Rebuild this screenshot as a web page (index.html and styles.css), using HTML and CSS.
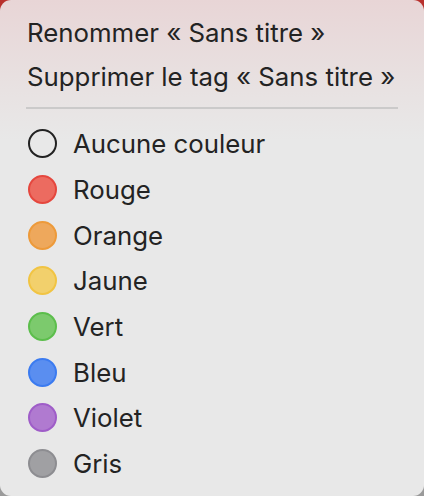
FILE: index.html
```html
<!DOCTYPE html>
<html lang="fr">
<head>
<meta charset="utf-8">
<link rel="stylesheet" href="styles.css">
</head>
<body>
<div class="menu">
  <div class="item">Renommer « Sans titre »</div>
  <div class="item">Supprimer le tag « Sans titre »</div>
  <div class="sep"></div>
  <div class="tag"><span class="dot none"></span>Aucune couleur</div>
  <div class="tag"><span class="dot red"></span>Rouge</div>
  <div class="tag"><span class="dot orange"></span>Orange</div>
  <div class="tag"><span class="dot yellow"></span>Jaune</div>
  <div class="tag"><span class="dot green"></span>Vert</div>
  <div class="tag"><span class="dot blue"></span>Bleu</div>
  <div class="tag"><span class="dot purple"></span>Violet</div>
  <div class="tag"><span class="dot gray"></span>Gris</div>
</div>
</body>
</html>
```
FILE: styles.css
```css
html, body {
  margin: 0;
  padding: 0;
}
body {
  width: 424px;
  height: 496px;
  overflow: hidden;
  background: linear-gradient(#b8302c 0, #b8302c 30px, #9a9a9a 466px);
}
.menu {
  box-sizing: border-box;
  width: 424px;
  height: 496px;
  border-radius: 11px;
  background: linear-gradient(180deg, #e8d5d6 0px, #e8e2e2 90px, #e8e8e8 140px, #e8e8e8 100%);
  padding: 11px 0 0 0;
  font-family: Inter, "Noto Sans", "Liberation Sans", sans-serif;
  font-size: 25.8px;
  color: #232323;
  display: flex;
  flex-direction: column;
}
.item {
  height: 44px;
  line-height: 44px;
  padding-left: 27px;
  white-space: nowrap;
}
.sep {
  height: 2px;
  background: #cbcaca;
  margin: 8px 26px 12px 26px;
}
.tag {
  height: 45.7px;
  display: flex;
  align-items: center;
  padding-left: 28px;
  white-space: nowrap;
}
.dot {
  box-sizing: border-box;
  width: 29px;
  height: 29px;
  border-radius: 50%;
  border: 2px solid;
  margin-right: 16px;
  flex: none;
}
.none { border-color: #222; background: transparent; }
.red { background: #ec6b60; border-color: #e5473e; }
.orange { background: #eea85c; border-color: #ed9a3a; }
.yellow { background: #f2d06c; border-color: #f1c443; }
.green { background: #7cca6d; border-color: #5cbe4c; }
.blue { background: #5a8ef0; border-color: #3b7bf0; }
.purple { background: #b07ad0; border-color: #9f5dc8; }
.gray { background: #a0a0a3; border-color: #8d8d91; }
```
